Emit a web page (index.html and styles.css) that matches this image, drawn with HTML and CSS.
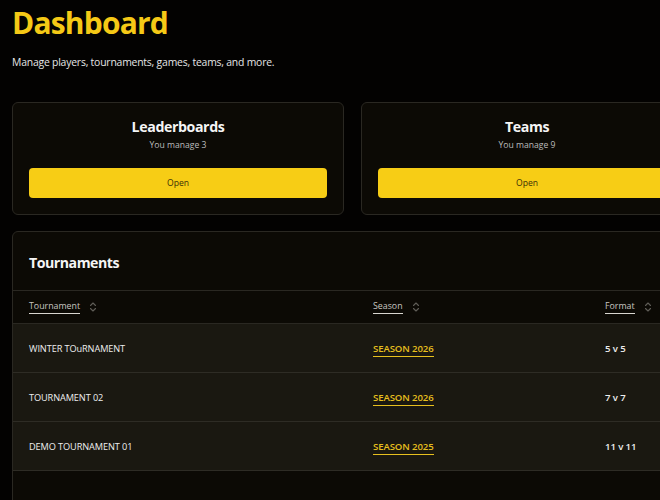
FILE: index.html
```html
<!DOCTYPE html>
<html lang="en">
<head>
<meta charset="utf-8">
<title>Dashboard</title>
<link rel="stylesheet" href="styles.css">
</head>
<body>
<main class="page">
  <header class="head">
    <h1 class="title">Dashboard</h1>
    <p class="lead">Manage players, tournaments, games, teams, and more.</p>
  </header>

  <section class="cards">
    <div class="card">
      <h2 class="card-title">Leaderboards</h2>
      <p class="card-sub">You manage 3</p>
      <button class="btn">Open</button>
    </div>
    <div class="card">
      <h2 class="card-title">Teams</h2>
      <p class="card-sub">You manage 9</p>
      <button class="btn">Open</button>
    </div>
  </section>

  <section class="panel">
    <h2 class="panel-title">Tournaments</h2>
    <table class="table">
      <colgroup>
        <col class="c1"><col class="c2"><col class="c3">
      </colgroup>
      <thead>
        <tr>
          <th><span class="th"><span class="th-label">Tournament</span><svg class="sort" viewBox="0 0 8 12" width="8" height="12"><path d="M1.5 4.5 4 2l2.5 2.5M1.5 7.5 4 10l2.5-2.5" fill="none" stroke="currentColor" stroke-width="1.1" stroke-linecap="round" stroke-linejoin="round"/></svg></span></th>
          <th><span class="th"><span class="th-label">Season</span><svg class="sort" viewBox="0 0 8 12" width="8" height="12"><path d="M1.5 4.5 4 2l2.5 2.5M1.5 7.5 4 10l2.5-2.5" fill="none" stroke="currentColor" stroke-width="1.1" stroke-linecap="round" stroke-linejoin="round"/></svg></span></th>
          <th><span class="th"><span class="th-label">Format</span><svg class="sort" viewBox="0 0 8 12" width="8" height="12"><path d="M1.5 4.5 4 2l2.5 2.5M1.5 7.5 4 10l2.5-2.5" fill="none" stroke="currentColor" stroke-width="1.1" stroke-linecap="round" stroke-linejoin="round"/></svg></span></th>
        </tr>
      </thead>
      <tbody>
        <tr><td>WINTER TOuRNAMENT</td><td><a class="link" href="#">SEASON 2026</a></td><td class="fmt">5 v 5</td></tr>
        <tr><td>TOURNAMENT 02</td><td><a class="link" href="#">SEASON 2026</a></td><td class="fmt">7 v 7</td></tr>
        <tr><td>DEMO TOURNAMENT 01</td><td><a class="link" href="#">SEASON 2025</a></td><td class="fmt">11 v 11</td></tr>
      </tbody>
    </table>
  </section>
</main>
</body>
</html>
```

FILE: styles.css
```css
html, body {
  margin: 0;
  padding: 0;
  background: #030201;
  overflow: hidden;
}
body {
  font-family: "Open Sans", "Noto Sans", sans-serif;
  color: #f2f2f2;
}
.page {
  width: 681px;
  padding: 0 0 0 12px;
}
.head {
  padding-top: 1px;
}
.title {
  margin: 0;
  font-size: 30px;
  line-height: 44px;
  font-weight: 700;
  color: #f5c916;
  letter-spacing: -0.8px;
}
.lead {
  margin: 9px 0 0;
  font-size: 10.4px;
  line-height: 16px;
  color: #e6e6e6;
  letter-spacing: -0.2px;
}
.cards {
  display: grid;
  grid-template-columns: 332px 332px;
  gap: 17px;
  margin-top: 32px;
}
.card {
  height: 113px;
  box-sizing: border-box;
  border: 1px solid #2a2822;
  border-radius: 6px;
  background: #0c0a05;
  padding: 13px 16px 0;
  display: flex;
  flex-direction: column;
  align-items: center;
}
.card-title {
  margin: 0;
  font-size: 14.2px;
  line-height: 22px;
  font-weight: 700;
  color: #f5f5f5;
  letter-spacing: -0.4px;
}
.card-sub {
  margin: 0;
  font-size: 8.6px;
  line-height: 14px;
  color: #bdbdbd;
}
.btn {
  margin-top: 16px;
  width: 100%;
  height: 30px;
  border: 0;
  border-radius: 4px;
  background: #f7cd15;
  color: #3a2f08;
  font-family: inherit;
  font-size: 8.6px;
}
.panel {
  margin-top: 16px;
  border: 1px solid #2a2822;
  border-radius: 6px;
  background: #0c0a05;
  height: 290px;
  box-sizing: border-box;
}
.panel-title {
  margin: 0;
  padding: 19px 16px 0;
  height: 58px;
  box-sizing: border-box;
  font-size: 14.2px;
  line-height: 24px;
  font-weight: 700;
  color: #f5f5f5;
  letter-spacing: -0.5px;
}
.table {
  width: 100%;
  border-collapse: collapse;
  table-layout: fixed;
}
.c1 { width: 344px; }
.c2 { width: 232px; }
.table th {
  height: 33px;
  box-sizing: border-box;
  padding: 9px 0 0 16px;
  vertical-align: top;
  text-align: left;
  font-weight: 400;
  border-top: 1px solid #2a2822;
  border-bottom: 1px solid #2a2822;
}
.th {
  display: flex;
  align-items: center;
  gap: 9px;
}
.th-label {
  font-size: 8.8px;
  line-height: 12px;
  color: #c8c6c0;
  border-bottom: 1px solid #d8d6d0;
  padding-bottom: 1px;
}
.sort {
  color: #5f5d57;
}
.table td {
  height: 48px;
  padding: 0 0 0 16px;
  background: #1a1811;
  border-bottom: 1px solid #2e2c25;
  font-size: 9.2px;
  color: #eeeeee;
  letter-spacing: -0.1px;
}
.link {
  color: #e6bf1e;
  font-weight: 600;
  font-size: 9.6px;
  text-decoration: none;
  border-bottom: 1px solid #e6bf1e;
  padding-bottom: 1px;
}
.fmt {
  font-weight: 600;
  font-size: 9.6px !important;
}
```
